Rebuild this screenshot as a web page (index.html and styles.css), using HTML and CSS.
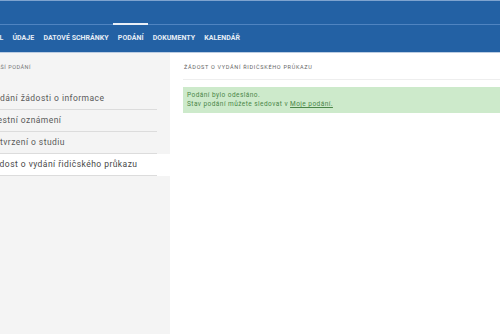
FILE: index.html
```html
<!DOCTYPE html>
<html>

<head>
    <meta charset="utf-8" />
    <title>Podání</title>
    <meta name="viewport" content="width=device-width, initial-scale=1.0" />
    <link rel="stylesheet" href="styles.css">
</head>

<body>
    <div class="shell">
        <!-- horní lišta -->
        <header class="topbar">
            <div class="brand_row"></div>
            <nav class="main_nav">
                <a href="#">Profil</a>
                <a href="#">Údaje</a>
                <a href="#">Datové schránky</a>
                <a href="#" class="active">Podání</a>
                <a href="#">Dokumenty</a>
                <a href="#">Kalendář</a>
            </nav>
        </header>

        <div class="page">
            <aside class="sidebar">
                <h2>Další podání</h2>
                <ul class="side_list">
                    <li><a href="#">Podání žádosti o informace</a></li>
                    <li><a href="#">Trestní oznámení</a></li>
                    <li><a href="#">Potvrzení o studiu</a></li>
                    <li class="active"><a href="#">Žádost o vydání řidičského průkazu</a></li>
                </ul>
            </aside>

            <main class="content">
                <h1>Žádost o vydání řidičského průkazu</h1>
                <div class="alert">
                    <p>Podání bylo odesláno.</p>
                    <p>Stav podání můžete sledovat v <a href="#">Moje podání.</a></p>
                </div>
            </main>
        </div>
    </div>
</body>

</html>
```

FILE: styles.css
```css
* {
    margin: 0;
    padding: 0;
    box-sizing: border-box;
}

body {
    font-family: Roboto, "Liberation Sans", sans-serif;
    background: #fff;
    overflow: hidden;
}

a {
    text-decoration: none;
    color: inherit;
}

ul {
    list-style: none;
}

.shell {
    margin-left: -25px;
    width: 550px;
}

/* horní lišta */
.topbar {
    background: #2361a4;
    border-top: 1px solid #7ea3cf;
    border-bottom: 1px solid #bccde2;
}

.brand_row {
    height: 23px;
}

.main_nav {
    display: flex;
    height: 28px;
    border-top: 1px solid #4f84c1;
}

.main_nav a {
    position: relative;
    padding: 0 4.6px;
    line-height: 27px;
    font-size: 7px;
    font-weight: 700;
    letter-spacing: 0.03px;
    text-transform: uppercase;
    color: #e6edf6;
}

.main_nav a.active::before {
    content: " ";
    position: absolute;
    left: 0;
    right: 0;
    top: -2px;
    height: 2px;
    background: #e9eff7;
}

/* obsah */
.page {
    display: flex;
    min-height: calc(100vh - 53px);
}

.sidebar {
    width: 195px;
    flex-shrink: 0;
    background: #f4f4f4;
    padding: 10px 13px 0 14px;
}

.sidebar h2 {
    font-size: 5.5px;
    line-height: 8px;
    font-weight: 400;
    letter-spacing: 0.5px;
    text-transform: uppercase;
    color: #777;
    margin-bottom: 17px;
}

.side_list li {
    border-bottom: 1px solid #dcdcdc;
}

.side_list li a {
    display: block;
    line-height: 21px;
    font-size: 8.5px;
    letter-spacing: 0.45px;
    color: #5a5a5a;
}

.side_list li.active {
    background: #fff;
    box-shadow: 13px 0 0 #fff;
}

.side_list li.active a {
    color: #484848;
}

.content {
    flex: 1;
    padding-left: 13px;
}

.content h1 {
    font-size: 5.5px;
    line-height: 8px;
    font-weight: 400;
    letter-spacing: 0.7px;
    text-transform: uppercase;
    color: #666;
    padding: 10px 0 8px 1px;
    border-bottom: 1px solid #eee;
}

.alert {
    margin-top: 7px;
    background: #cdeacb;
    padding: 4px 4px;
    font-size: 6.5px;
    line-height: 9px;
    letter-spacing: 0.45px;
    color: #4a8648;
}

.alert a {
    text-decoration: underline;
}
```
